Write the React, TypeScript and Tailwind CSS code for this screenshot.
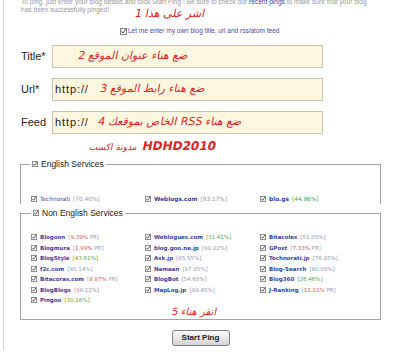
import React from 'react';

type Tone = 'gray' | 'green' | 'red';

interface Service {
  name: string;
  pct: string;
  tone: Tone;
}

const english: Service[] = [
  { name: 'Technorati', pct: '70.40%', tone: 'gray' },
  { name: 'Weblogs.com', pct: '93.17%', tone: 'gray' },
  { name: 'blo.gs', pct: '44.96%', tone: 'green' },
];

// listed row by row, three columns
const nonEnglish: Service[] = [
  { name: 'Blogoon', pct: '9.39%', tone: 'red' },
  { name: 'Weblogues.com', pct: '31.41%', tone: 'green' },
  { name: 'Bitacoles', pct: '51.05%', tone: 'gray' },
  { name: 'Blogmura', pct: '1.99%', tone: 'red' },
  { name: 'blog.goo.ne.jp', pct: '90.22%', tone: 'gray' },
  { name: 'GPost', pct: '7.33%', tone: 'red' },
  { name: 'BlogStyle', pct: '43.61%', tone: 'green' },
  { name: 'Ask.jp', pct: '65.55%', tone: 'gray' },
  { name: 'Technorati.jp', pct: '76.85%', tone: 'gray' },
  { name: 'f2c.com', pct: '95.14%', tone: 'gray' },
  { name: 'Namaan', pct: '97.95%', tone: 'gray' },
  { name: 'Blog-Search', pct: '80.09%', tone: 'gray' },
  { name: 'Bitacoras.com', pct: '8.87%', tone: 'red' },
  { name: 'BlogBot', pct: '54.60%', tone: 'gray' },
  { name: 'Blog360', pct: '26.46%', tone: 'green' },
  { name: 'BlogBlogs', pct: '98.12%', tone: 'gray' },
  { name: 'MapLog.jp', pct: '99.45%', tone: 'gray' },
  { name: 'J-Ranking', pct: '12.21%', tone: 'red' },
  { name: 'Pingoo', pct: '30.16%', tone: 'green' },
];

function Check({ size = 6 }: { size?: number }) {
  return (
    <svg width={size} height={size} viewBox="0 0 7 7" className="shrink-0">
      <rect x="0.5" y="0.5" width="6" height="6" fill="#fff" stroke="#7f7f7f" />
      <path d="M1.6 3.4 L3 5 L5.6 1.3" fill="none" stroke="#333" strokeWidth="1" />
    </svg>
  );
}

function Pct({ s }: { s: Service }) {
  if (s.tone === 'red') {
    return (
      <span className="text-[#98a2b3]">
        [<span className="text-[#d9534f]">{s.pct}</span> PR]
      </span>
    );
  }
  return <span className={s.tone === 'green' ? 'text-[#4fa34f]' : 'text-[#8e9aad]'}>[{s.pct}]</span>;
}

function Item({ s, bold = true }: { s: Service; bold?: boolean }) {
  return (
    <div className="flex items-center gap-[3px] whitespace-nowrap">
      <Check />
      <span className={`text-[#3a3f9e] ${bold ? 'font-bold' : ''}`}>{s.name}</span>
      <span className="font-normal">
        <Pct s={s} />
      </span>
    </div>
  );
}

function Field({ label, children, pad }: { label: string; children?: React.ReactNode; pad: string }) {
  return (
    <>
      <span className="pl-[1px] text-[11px] text-[#222]">{label}</span>
      <div className={`flex h-[23px] w-[271px] items-center border border-[#c9c3b1] bg-[#fdf7df] ${pad}`}>{children}</div>
    </>
  );
}

// the red notes are Arabic; DejaVu has no oblique Arabic, so slant by hand
const red = "inline-block -skew-x-[12deg] text-[#dc2424] font-['DejaVu_Sans',sans-serif]";

export default function App() {
  return (
    <div className="h-[352px] w-[400px] overflow-hidden bg-white font-['Liberation_Sans',Arial,sans-serif]">
      <div className="ml-[3px] h-full border-l border-[#d4d4d4] pl-[16px]">
        <div className="-mt-[2px] pl-[1px] text-[6.6px] leading-[8px] text-[#9a9a9a]">
          <div className="whitespace-nowrap">
            To ping, just enter your blog details and click Start Ping ! Be sure to check our{' '}
            <span className="text-[#3447b0]">recent pings</span> to make sure that your blog
          </div>
          <div className="flex items-start">
            <span>has been successfully pinged!</span>
            <span dir="rtl" className={`ml-[26px] mt-[1px] text-[11px] leading-[14px] ${red}`}>
              اشر على هذا 1
            </span>
          </div>
        </div>

        <div className="ml-[100px] mt-[5px] flex h-[10px] items-center gap-[1px] text-[6.5px] text-[#4848a8]">
          <Check size={7} />
          <span>Let me enter my own blog title, url and rss/atom feed</span>
        </div>

        <div className="mt-[9px] grid grid-cols-[32px_271px] items-center gap-y-[10px]">
          <Field label="Title*" pad="pl-[25px]">
            <span dir="rtl" className={`text-[11px] ${red}`}>ضع هناء عنوان الموقع 2</span>
          </Field>
          <Field label="Url*" pad="pl-[2px]">
            <span className="text-[11px] tracking-[0.9px] text-[#222]">http://</span>
            <span dir="rtl" className={`ml-[11px] text-[11px] ${red}`}>ضع هناء رابط الموقع 3</span>
          </Field>
          <Field label="Feed" pad="pl-[2px]">
            <span className="text-[11px] tracking-[0.9px] text-[#222]">http://</span>
            <span dir="rtl" className={`ml-[9px] text-[11px] ${red}`}>ضع هناء RSS الخاص بموقعك 4</span>
          </Field>
        </div>

        <div className="ml-[70px] mt-[4px] flex h-[14px] items-center">
          <span dir="rtl" className={red}>
            <span className="text-[12px] font-bold">HDHD2010</span>{' '}
            <span className="text-[9px]">مدونة اكسب</span>
          </span>
        </div>

        <fieldset className="mt-[7px] w-[361px] border border-b-0 border-[#a3a3a3] pb-0">
          <legend className="ml-[9px] px-[2px]">
            <span className="flex h-[10px] items-center gap-[3px] text-[8.5px] text-[#1a1a1a]">
              <Check />
              English Services
            </span>
          </legend>
          <div className="grid grid-cols-[114px_115px_1fr] pl-[10px] pt-[25px] text-[5.8px] leading-[10px] font-['DejaVu_Sans',sans-serif]">
            {english.map((s, i) => (
              <Item key={s.name} s={s} bold={i !== 0} />
            ))}
          </div>
        </fieldset>

        <fieldset className="mt-[4px] w-[361px] border border-[#a3a3a3] pb-[1px]">
          <legend className="ml-[10px] px-[2px]">
            <span className="flex h-[10px] items-center gap-[3px] text-[8.5px] text-[#1a1a1a]">
              <Check />
              Non English Services
            </span>
          </legend>
          <div className="grid auto-rows-[10.5px] grid-cols-[114px_115px_1fr] items-center pl-[10px] pt-[14px] text-[5.5px] font-['DejaVu_Sans',sans-serif]">
            {nonEnglish.map((s) => (
              <Item key={s.name} s={s} />
            ))}
          </div>
          <div className="flex h-[12px] items-center pl-[151px]">
            <span dir="rtl" className={`text-[10px] ${red}`}>انقر هناء 5</span>
          </div>
        </fieldset>

        <div className="mt-[10px] flex w-[361px] justify-center">
          <button className="h-[16px] w-[58px] rounded-[3px] border border-[#7d7d7d] bg-linear-to-b from-[#fbfbfb] to-[#d4d4d4] text-[8px] font-bold text-[#222]">
            Start Ping
          </button>
        </div>
      </div>
    </div>
  );
}
